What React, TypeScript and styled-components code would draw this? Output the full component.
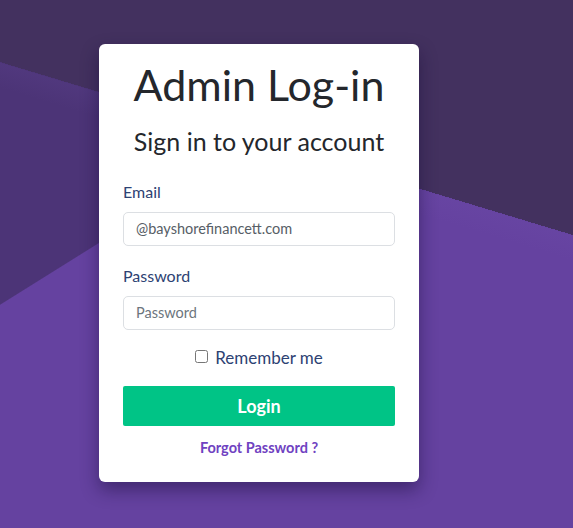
import React from "react";
import styled, { createGlobalStyle } from "styled-components";

const GlobalStyle = createGlobalStyle`
  html, body { margin: 0; padding: 0; }
  body { font-family: "Lato", "Noto Sans", sans-serif; }
  * { box-sizing: border-box; }
`;

const Page = styled.div`
  width: 100%;
  min-height: 528px;
  display: flex;
  align-items: flex-start;
  padding: 44px 0 0 99px;
  background:
    linear-gradient(196.8deg, #43315f 225px, transparent 225px),
    linear-gradient(196.8deg, transparent 225px, rgba(120, 90, 180, 0.10) 226px, transparent 250px),
    linear-gradient(148deg, #4c3477 258px, transparent 259px),
    #6542a0;
`;

const Card = styled.div`
  width: 320px;
  background: #fff;
  border-radius: 6px;
  padding: 15px 24px 24px;
  box-shadow: 0 8px 18px rgba(20, 8, 50, 0.45);
  display: flex;
  flex-direction: column;
`;

const Title = styled.h1`
  margin: 0;
  font-size: 43px;
  font-weight: 400;
  line-height: 1.2;
  text-align: center;
  color: #24272c;
`;

const Subtitle = styled.h2`
  margin: 15px 0 0;
  font-size: 25px;
  font-weight: 400;
  line-height: 1.2;
  text-align: center;
  color: #24272c;
`;

const Form = styled.form`
  margin-top: 24px;
  display: flex;
  flex-direction: column;
`;

const Group = styled.div<{ $mb?: number }>`
  display: flex;
  flex-direction: column;
  margin-bottom: ${(p) => p.$mb ?? 18}px;
`;

const Label = styled.label`
  font-size: 16px;
  line-height: 24px;
  color: #2d4273;
  margin-bottom: 8px;
`;

const Input = styled.input`
  height: 34px;
  width: 100%;
  border: 1px solid #dcdfe3;
  border-radius: 5px;
  padding: 0 12px;
  font-family: inherit;
  font-size: 14.5px;
  color: #575e66;
  background: #fff;
  outline: none;
  &::placeholder { color: #6c757d; }
`;

const CheckRow = styled.label`
  display: flex;
  justify-content: center;
  align-items: center;
  gap: 7px;
  font-size: 17px;
  line-height: 24px;
  color: #2d4273;
  margin-top: 1px;
`;

const Check = styled.input`
  width: 13px;
  height: 13px;
  margin: 0;
  position: relative;
  top: -1px;
`;

const LoginButton = styled.button`
  margin-top: 16px;
  height: 40px;
  width: 100%;
  border: none;
  border-radius: 2px;
  background: #00c486;
  color: #fff;
  font-family: inherit;
  font-size: 18px;
  font-weight: 700;
  cursor: pointer;
`;

const Forgot = styled.a`
  margin-top: 11px;
  align-self: center;
  font-size: 14.5px;
  line-height: 21px;
  font-weight: 700;
  color: #6f42c1;
  text-decoration: none;
`;

export default function App() {
  return (
    <>
      <GlobalStyle />
      <Page>
        <Card>
          <Title>Admin Log-in</Title>
          <Subtitle>Sign in to your account</Subtitle>
          <Form onSubmit={(e) => e.preventDefault()}>
            <Group>
              <Label htmlFor="email">Email</Label>
              <Input id="email" type="text" defaultValue="@bayshorefinancett.com" />
            </Group>
            <Group $mb={15}>
              <Label htmlFor="password">Password</Label>
              <Input id="password" type="password" placeholder="Password" />
            </Group>
            <CheckRow>
              <Check type="checkbox" />
              Remember me
            </CheckRow>
            <LoginButton type="submit">Login</LoginButton>
            <Forgot href="#">Forgot Password ?</Forgot>
          </Form>
        </Card>
      </Page>
    </>
  );
}
